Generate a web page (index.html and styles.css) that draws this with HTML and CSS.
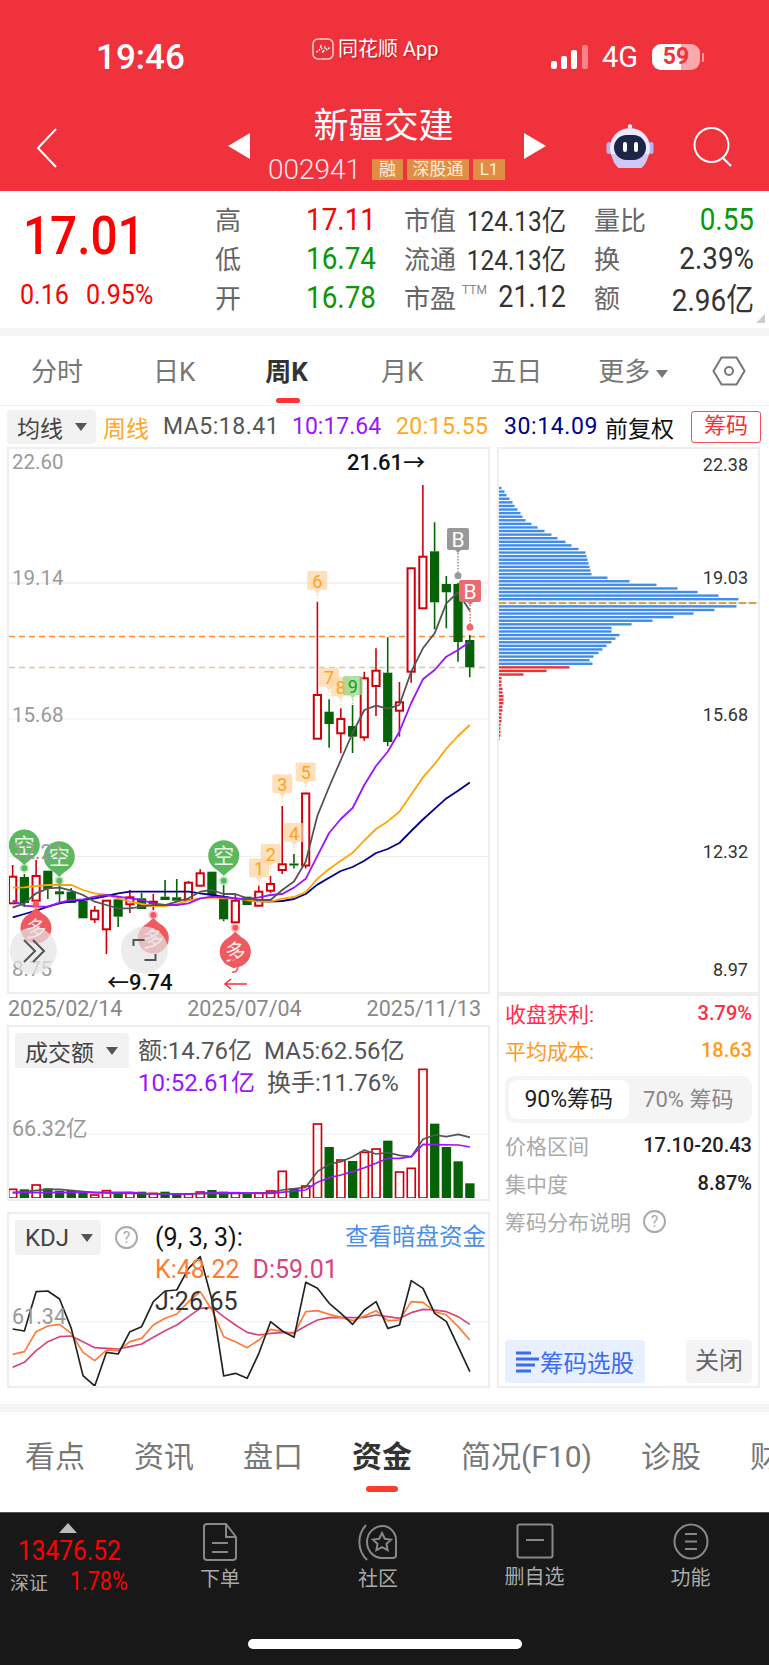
FILE: index.html
```html
<!DOCTYPE html>
<html lang="zh-CN">
<head>
    <meta charset="UTF-8">
    <title>新疆交建 周K</title>
    <meta name="viewport" content="width=device-width, initial-scale=1.0">
    <link rel="stylesheet" href="styles.css">
</head>
<body>
<div class="phone">
    <header class="hero">
        <div class="status">
            <span class="clock">19:46</span>
            <span class="carrier">
                <svg class="app-logo" width="22" height="22" viewBox="0 0 22 22">
                    <rect x="1" y="1" width="20" height="20" rx="5" fill="#e8303a" stroke="#fbd0d0" stroke-width="1.5"/>
                    <path d="M4 14l3-1 2-5 2 7 2-6 2 3 3-3" fill="none" stroke="#fff" stroke-width="1.3" stroke-dasharray="2 1.4"/>
                </svg>
                同花顺 App
            </span>
            <span class="status-right">
                <svg width="38" height="24" viewBox="0 0 38 24">
                    <rect x="0" y="16" width="6" height="8" rx="2" fill="#fff"/>
                    <rect x="10" y="11" width="6" height="13" rx="2" fill="#fff"/>
                    <rect x="20" y="5" width="6" height="19" rx="2" fill="#fff"/>
                    <rect x="31" y="0" width="6" height="24" rx="2" fill="#fff" fill-opacity=".4"/>
                </svg>
                <span class="net">4G</span>
                <span class="battery">59</span>
                <span class="battery-nub"></span>
            </span>
        </div>
        <div class="stock-nav">
            <svg class="back" width="22" height="40" viewBox="0 0 22 40">
                <path d="M20 1L2 20l18 19" fill="none" stroke="#fff" stroke-width="2"/>
            </svg>
            <svg class="prev" width="22" height="26" viewBox="0 0 22 26"><path d="M22 0v26L0 13z" fill="#fff"/></svg>
            <div class="stock-name">
                <div class="title">新疆交建</div>
                <div class="code-row">
                    <span class="code">002941</span>
                    <span class="tag tag-a">融</span>
                    <span class="tag tag-b">深股通</span>
                    <span class="tag tag-c">L1</span>
                </div>
            </div>
            <svg class="next" width="22" height="26" viewBox="0 0 22 26"><path d="M0 0v26l22-13z" fill="#fff"/></svg>
            <svg class="robot" width="48" height="44" viewBox="0 0 48 44">
                <path d="M24 6V2" stroke="#e8e6f8" stroke-width="2"/>
                <circle cx="24" cy="2.5" r="2.2" fill="#f1effb"/>
                <rect x="0.5" y="18" width="5" height="12" rx="2.5" fill="#b9b4ee"/>
                <rect x="42.5" y="18" width="5" height="12" rx="2.5" fill="#b9b4ee"/>
                <circle cx="24" cy="24" r="20" fill="#eceafc"/>
                <path d="M6 30a18 18 0 0 0 36 0" fill="#cfc8f6"/>
                <rect x="8" y="11" width="32" height="25" rx="12.5" fill="#1d2547"/>
                <rect x="17" y="18" width="4" height="10" rx="2" fill="#fff"/>
                <rect x="28" y="18" width="4" height="10" rx="2" fill="#fff"/>
            </svg>
            <svg class="search" width="40" height="40" viewBox="0 0 40 40">
                <circle cx="18.5" cy="18" r="17" fill="none" stroke="#fff" stroke-width="2"/>
                <path d="M30 31l8 8" stroke="#fff" stroke-width="2"/>
            </svg>
        </div>
    </header>

    <section class="quote">
        <div class="quote-main">
            <div class="last">17.01</div>
            <div class="change"><span>0.16</span><span>0.95%</span></div>
        </div>
        <div class="quote-grid">
            <span class="q-label">高</span><span class="q-val up">17.11</span>
            <span class="q-label pad">市值</span><span class="q-val small">124.13亿</span>
            <span class="q-label pad">量比</span><span class="q-val down">0.55</span>
            <span class="q-label">低</span><span class="q-val down">16.74</span>
            <span class="q-label pad">流通</span><span class="q-val small">124.13亿</span>
            <span class="q-label pad">换</span><span class="q-val dark">2.39%</span>
            <span class="q-label">开</span><span class="q-val down">16.78</span>
            <span class="q-label pad">市盈<span class="ttm">TTM</span></span><span class="q-val small big">21.12</span>
            <span class="q-label pad">额</span><span class="q-val dark">2.96亿</span>
        </div>
        <span class="corner"></span>
    </section>
    <div class="band"></div>

    <nav class="period-tabs">
        <span class="p-tab t1">分时</span>
        <span class="p-tab t2">日K</span>
        <span class="p-tab t3 active">周K</span>
        <span class="p-tab t4">月K</span>
        <span class="p-tab t5">五日</span>
        <span class="p-tab t6">更多<i class="caret"></i></span>
        <svg class="hex" width="34" height="30" viewBox="0 0 34 30">
            <path d="M9.5 1.5h15L32.5 15l-8 13.5h-15L1.5 15z" fill="none" stroke="#777" stroke-width="2"/>
            <circle cx="17" cy="15" r="4" fill="none" stroke="#777" stroke-width="2"/>
        </svg>
    </nav>

    <div class="legend">
        <span class="select ma-select">均线<i class="caret dark-caret"></i></span>
        <span class="lg w-week c-orange">周线</span>
        <span class="lg w-ma5 c-gray">MA5:18.41</span>
        <span class="lg w-ma10 c-purple">10:17.64</span>
        <span class="lg w-ma20 c-orange">20:15.55</span>
        <span class="lg w-ma30 c-navy">30:14.09</span>
        <span class="lg c-black">前复权</span>
        <span class="chip-btn">筹码</span>
    </div>

    <div class="charts">
        <div class="left-col">
            <div class="panel main-panel">
                <svg id="kline" width="479" height="543" viewBox="9 449 479 543"></svg>
            </div>
            <div class="dates"><span>2025/02/14</span><span>2025/07/04</span><span>2025/11/13</span></div>
            <div class="panel vol-panel">
                <svg id="volume" width="479" height="171" viewBox="27 81 1437 513" preserveAspectRatio="none"></svg>
                <span class="select vol-select">成交额<i class="caret dark-caret"></i></span>
                <div class="vol-info">
                    <div><span>额:14.76亿</span><span>MA5:62.56亿</span></div>
                    <div><span class="c-purple">10:52.61亿</span><span>换手:11.76%</span></div>
                </div>
                <span class="axis-note vol-note">66.32亿</span>
            </div>
            <div class="panel kdj-panel">
                <svg id="kdj" width="479" height="172" viewBox="27 642 1437 516" preserveAspectRatio="none"></svg>
                <span class="select kdj-select">KDJ<i class="caret dark-caret"></i></span>
                <span class="help kdj-help">?</span>
                <div class="kdj-info">
                    <div class="c-black">(9, 3, 3):</div>
                    <div><span class="c-k">K:48.22</span><span class="c-d">D:59.01</span></div>
                    <div class="c-j">J:26.65</div>
                </div>
                <span class="dark-link">查看暗盘资金</span>
                <span class="axis-note kdj-note">61.34</span>
            </div>
        </div>
        <div class="right-col">
            <div class="panel chip-panel">
                <svg id="chips" width="259" height="543" viewBox="499 448 259 543"></svg>
            </div>
            <div class="panel chip-info">
                <div class="row c-profit"><span>收盘获利:</span><b>3.79%</b></div>
                <div class="row c-cost"><span>平均成本:</span><b>18.63</b></div>
                <div class="switch">
                    <span class="switch-on">90%筹码</span>
                    <span class="switch-off">70% 筹码</span>
                </div>
                <div class="row stat"><span>价格区间</span><b>17.10-20.43</b></div>
                <div class="row stat"><span>集中度</span><b>8.87%</b></div>
                <div class="row stat explain"><span>筹码分布说明</span><span class="help">?</span></div>
                <div class="chip-actions">
                    <span class="pick">
                        <svg width="23" height="22" viewBox="0 0 23 22">
                            <path d="M0 2h15M0 8h23M0 14h19M0 20h15" stroke="#3a6bf5" stroke-width="3"/>
                        </svg>
                        筹码选股
                    </span>
                    <span class="close">关闭</span>
                </div>
            </div>
        </div>
    </div>

    <div class="band"></div>
    <nav class="info-tabs">
        <span>看点</span>
        <span>资讯</span>
        <span>盘口</span>
        <span class="active">资金</span>
        <span>简况(F10)</span>
        <span>诊股</span>
        <span>财务</span>
    </nav>

    <footer class="dock">
        <div class="ticker">
            <i class="tri"></i>
            <div class="index">13476.52</div>
            <div class="index-row"><span>深证</span><b>1.78%</b></div>
        </div>
        <div class="dock-item">
            <svg width="34" height="38" viewBox="0 0 34 38">
                <path d="M4 1h19l10 13v20a3 3 0 0 1-3 3H4a3 3 0 0 1-3-3V4a3 3 0 0 1 3-3z" fill="none" stroke="#888" stroke-width="2"/>
                <path d="M23 1v13h10M9 20h16M9 29h16" fill="none" stroke="#888" stroke-width="2"/>
            </svg>
            下单
        </div>
        <div class="dock-item">
            <svg width="40" height="38" viewBox="0 0 40 38">
                <path d="M8 2C-1 12-1 27 9 37" fill="none" stroke="#888" stroke-width="2"/>
                <path d="M25 3c7 0 13 7 13 14v15a3 3 0 0 1-3 3H24C15 35 9 27 9 19 9 10 16 3 25 3z" fill="none" stroke="#888" stroke-width="2"/>
                <path d="M24 10l2.8 5.8 6.2.8-4.5 4.3 1.1 6.2-5.6-3-5.600 3 1.100-6.200-4.500-4.300 6.200-.8z" fill="none" stroke="#888" stroke-width="2"/>
            </svg>
            社区
        </div>
        <div class="dock-item">
            <svg width="38" height="36" viewBox="0 0 38 36">
                <rect x="1.5" y="1.5" width="35" height="33" rx="2" fill="none" stroke="#888" stroke-width="2"/>
                <path d="M10 17h18" stroke="#888" stroke-width="2"/>
            </svg>
            删自选
        </div>
        <div class="dock-item">
            <svg width="36" height="37" viewBox="0 0 36 37">
                <ellipse cx="18" cy="18.5" rx="16.5" ry="17" fill="none" stroke="#888" stroke-width="2"/>
                <path d="M12 11h12M12 18.5h12M12 26h12" stroke="#888" stroke-width="2"/>
            </svg>
            功能
        </div>
        <div class="home-bar"></div>
    </footer>
</div>
<script src="chart.js"></script>
</body>
</html>
```

FILE: styles.css
```css
/* Base */
* {
    box-sizing: border-box;
}

body {
    margin: 0;
    background: #fff;
    font-family: Roboto, "Noto Sans CJK SC", sans-serif;
    color: #333;
}

.phone {
    width: 769px;
    height: 1665px;
    overflow: hidden;
    position: relative;
}

i {
    font-style: normal;
}

/* Red header */
.hero {
    height: 191px;
    background: #f0323c;
    color: #fff;
}

.status {
    height: 100px;
    position: relative;
    display: flex;
    align-items: center;
    padding: 14px 0 0 96px;
}

.clock {
    font-size: 35px;
    font-weight: 500;
}

.carrier {
    position: absolute;
    left: 312px;
    top: 37px;
    display: flex;
    align-items: center;
    gap: 4px;
    font-size: 20px;
    line-height: 24px;
    text-shadow: 1px 1px 2px rgba(120, 0, 0, 0.5);
}

.status-right {
    margin-left: auto;
    margin-right: 65px;
    display: flex;
    align-items: center;
}

.net {
    font-size: 29px;
    margin-left: 13px;
    width: 50px;
}

.battery {
    width: 48px;
    height: 26px;
    border-radius: 9px;
    background: linear-gradient(to right, #fff 60%, #fba7ab 60%);
    color: #f0323c;
    font-size: 23px;
    font-weight: 700;
    text-align: center;
    line-height: 26px;
}

.battery-nub {
    width: 2px;
    height: 9px;
    margin-left: 2px;
    background: #fba7ab;
    border-radius: 1px;
}

.stock-nav {
    height: 91px;
    display: flex;
    align-items: flex-start;
    padding-left: 36px;
}

.back {
    margin-top: 28px;
}

.prev {
    margin: 33px 0 0 170px;
}

.next {
    margin-top: 33px;
}

.stock-name {
    width: 274px;
    text-align: center;
}

.title {
    font-size: 35px;
    line-height: 50px;
    margin: 2px 7px 0 0;
}

.code-row {
    display: flex;
    align-items: center;
    height: 21px;
    margin: 7px 0 0 17px;
}

.code {
    font-size: 28px;
    font-weight: 300;
    margin-right: 10px;
    width: 95px;
    color: #fde6e6;
}

.tag {
    height: 21px;
    background: #e08e45;
    color: #ffeeda;
    font-size: 17px;
    line-height: 21px;
    text-align: center;
    margin-right: 4px;
}

.tag-a {
    width: 31px;
}

.tag-b {
    width: 62px;
}

.tag-c {
    width: 32px;
    margin: 0;
}

.robot {
    margin: 24px 0 0 60px;
}

.search {
    margin: 27px 0 0 39px;
}

/* Quote block */
.quote {
    height: 137px;
    display: flex;
    position: relative;
}

.quote-main {
    width: 215px;
    padding: 15px 0 0 0;
}

.last {
    font-size: 53px;
    font-weight: 500;
    line-height: 60px;
    color: #f00;
    margin-left: 23px;
    transform: scaleX(.9);
    transform-origin: left center;
}

.change {
    font-size: 27px;
    line-height: 32px;
    color: #f00;
    display: flex;
    padding: 13px 0 0 20px;
}

.change span {
    width: 66px;
    transform: scaleX(.93);
    transform-origin: left center;
    white-space: nowrap;
}

.quote-grid {
    width: 539px;
    padding-top: 8px;
    display: grid;
    grid-template-columns: 30px 131px 64px 126px 64px 124px;
    grid-auto-rows: 39px;
    align-items: center;
}

.q-label {
    font-size: 26px;
    color: #666;
    white-space: nowrap;
}

.q-label.pad {
    padding-left: 28px;
}

.q-val {
    font-size: 32px;
    text-align: right;
    white-space: nowrap;
    transform: scaleX(.87);
    transform-origin: right center;
}

.q-val.small {
    font-size: 28px;
    color: #333;
}

.q-val.big {
    font-size: 31px;
}

.q-val.dark {
    color: #333;
}

.up {
    color: #f00;
}

.down {
    color: #089808;
}

.ttm {
    font-size: 12px;
    vertical-align: 14px;
    margin-left: 6px;
    color: #888;
}

.corner {
    position: absolute;
    right: 4px;
    bottom: 5px;
    width: 0;
    height: 0;
    border-left: 9px solid transparent;
    border-bottom: 9px solid #ccc;
}

.band {
    height: 8px;
    background: #f5f5f5;
}

/* Period tabs */
.period-tabs {
    height: 70px;
    position: relative;
    border-bottom: 1px solid #eee;
    display: flex;
    align-items: center;
    font-size: 26px;
    color: #777;
    padding-bottom: 3px;
}

.p-tab {
    white-space: nowrap;
}

.t1 {
    margin-left: 31px;
}

.t2 {
    margin-left: 70px;
}

.t3 {
    margin-left: 70px;
}

.t4 {
    margin-left: 73px;
}

.t5 {
    margin-left: 67px;
}

.t6 {
    margin-left: 56px;
}

.p-tab.active {
    font-weight: 700;
    color: #333;
    position: relative;
}

.p-tab.active::after {
    content: "";
    position: absolute;
    left: 11px;
    bottom: -15px;
    width: 24px;
    height: 5px;
    border-radius: 3px;
    background: #f33;
}

.caret {
    display: inline-block;
    width: 0;
    height: 0;
    margin-left: 6px;
    vertical-align: 3px;
    border-left: 6px solid transparent;
    border-right: 6px solid transparent;
    border-top: 8px solid #777;
}

.hex {
    margin: 3px 0 0 44px;
}

/* Legend row */
.legend {
    height: 41px;
    display: flex;
    align-items: center;
    padding-left: 7px;
    font-size: 23px;
    white-space: nowrap;
}

.select {
    background: #f2f2f2;
    border-radius: 4px;
    color: #444;
    display: flex;
    align-items: center;
}

.dark-caret {
    border-top-color: #555;
    margin-left: 12px;
    vertical-align: 0;
}

.ma-select {
    width: 89px;
    height: 34px;
    padding-left: 10px;
    margin-right: 7px;
}

.w-week {
    width: 60px;
}

.w-ma5 {
    width: 129px;
    letter-spacing: .5px;
}

.w-ma10 {
    width: 104px;
}

.w-ma20 {
    width: 108px;
    letter-spacing: .4px;
}

.w-ma30 {
    width: 101px;
    letter-spacing: .6px;
}

.c-orange {
    color: #ffa726;
}

.c-gray {
    color: #555;
}

.c-purple {
    color: #9a14ff;
}

.c-navy {
    color: #00008b;
}

.c-black {
    color: #111;
}

.c-k {
    color: #ff7a33;
}

.c-d {
    color: #d6447f;
}

.c-j {
    color: #333;
}

.chip-btn {
    position: absolute;
    left: 691px;
    top: 411px;
    width: 70px;
    height: 32px;
    border: 1.5px solid #f0505a;
    border-radius: 3px;
    color: #f0323c;
    font-size: 22px;
    text-align: center;
    line-height: 28px;
}

/* Chart area */
.charts {
    display: flex;
    padding-left: 7px;
    height: 957px;
}

.left-col {
    width: 483px;
    margin-right: 7px;
}

.right-col {
    width: 263px;
}

.panel {
    border: 2px solid #eee;
    position: relative;
}

.panel svg {
    display: block;
}

.main-panel {
    height: 547px;
}

.dates {
    height: 31px;
    display: flex;
    justify-content: space-between;
    padding: 0 9px 0 1px;
    font-size: 21.5px;
    line-height: 30px;
    color: #888;
}

.vol-panel {
    height: 176px;
    margin-bottom: 11px;
}

.kdj-panel {
    height: 176px;
}

.vol-select {
    position: absolute;
    left: 6px;
    top: 6px;
    width: 114px;
    height: 35px;
    padding-left: 10px;
    font-size: 23px;
}

.vol-info {
    position: absolute;
    left: 129px;
    top: 8px;
    font-size: 24px;
    line-height: 32px;
    color: #555;
    white-space: nowrap;
}

.vol-info span + span {
    margin-left: 12px;
}

.axis-note {
    position: absolute;
    left: 3px;
    font-size: 21.5px;
    color: #999;
}

.vol-note {
    top: 84px;
}

.kdj-note {
    top: 90px;
}

.kdj-select {
    position: absolute;
    left: 6px;
    top: 6px;
    width: 86px;
    height: 35px;
    padding-left: 10px;
    font-size: 24px;
}

.help {
    display: inline-block;
    width: 23px;
    height: 23px;
    border: 2px solid #aaa;
    border-radius: 50%;
    color: #aaa;
    font-size: 16px;
    line-height: 19px;
    text-align: center;
}

.kdj-help {
    position: absolute;
    left: 106px;
    top: 12px;
}

.kdj-info {
    position: absolute;
    left: 146px;
    top: 8px;
    font-size: 25px;
    line-height: 32px;
    white-space: nowrap;
}

.kdj-info span + span {
    margin-left: 13px;
}

.dark-link {
    position: absolute;
    right: 2px;
    top: 7px;
    font-size: 23.5px;
    line-height: 32px;
    color: #4a90e8;
}

/* Right column */
.chip-panel {
    height: 547px;
}

.chip-info {
    height: 394px;
    padding: 0 6px;
    font-size: 21px;
}

.row {
    display: flex;
    justify-content: space-between;
    align-items: center;
    height: 37px;
    padding-bottom: 4px;
}

.row b {
    font-size: 20px;
    font-weight: 500;
}

.c-profit {
    color: #ff2d46;
}

.c-cost {
    color: #ff9a1a;
}

.switch {
    height: 47px;
    margin: 6px 0 5px;
    padding: 4px;
    display: flex;
    background: #f4f4f4;
    border-radius: 10px;
}

.switch-on {
    width: 120px;
    background: #fff;
    border-radius: 8px;
    color: #222;
    font-size: 23px;
    text-align: center;
    line-height: 39px;
}

.switch-off {
    width: 120px;
    color: #888;
    font-size: 22px;
    text-align: center;
    line-height: 39px;
}

.stat {
    height: 38px;
    color: #aaa;
}

.stat b {
    color: #222;
}

.explain {
    justify-content: flex-start;
    gap: 12px;
}

.chip-actions {
    display: flex;
    justify-content: space-between;
    margin-top: 98px;
}

.pick {
    width: 140px;
    height: 43px;
    background: #e8efff;
    border-radius: 4px;
    color: #3a6bf5;
    font-size: 23.5px;
    display: flex;
    align-items: center;
    padding-left: 11px;
    gap: 1px;
    white-space: nowrap;
}

.close {
    width: 66px;
    height: 43px;
    background: #f4f4f4;
    border-radius: 4px;
    color: #666;
    font-size: 24px;
    text-align: center;
    line-height: 43px;
}

/* Lower tabs */
.info-tabs {
    height: 100px;
    display: flex;
    align-items: center;
    gap: 49px;
    padding: 0 0 16px 25px;
    font-size: 30px;
    color: #777;
    white-space: nowrap;
}

.info-tabs .active {
    font-weight: 700;
    color: #333;
    position: relative;
}

.info-tabs .active::after {
    content: "";
    position: absolute;
    left: 14px;
    bottom: -16px;
    width: 32px;
    height: 6px;
    border-radius: 3px;
    background: #ff3b30;
}

/* Bottom dock */
.dock {
    height: 153px;
    background: #181818;
    border-top: 1px solid #555;
    display: grid;
    grid-template-columns: 141px 158px 158px 155px 157px;
    align-items: start;
    position: relative;
}

.ticker {
    padding: 10px 0 0 10px;
    position: relative;
    white-space: nowrap;
}

.tri {
    display: block;
    width: 0;
    height: 0;
    margin-left: 49px;
    border-left: 9px solid transparent;
    border-right: 9px solid transparent;
    border-bottom: 10px solid #bbb;
}

.index {
    font-size: 28px;
    line-height: 32px;
    margin: 2px 0 0 8px;
    color: #f00;
    transform: scaleX(.875);
    transform-origin: left center;
}

.index-row {
    display: flex;
    align-items: center;
    gap: 22px;
    margin-top: 0;
    font-size: 19px;
    color: #aaa;
}

.index-row b {
    font-size: 25px;
    font-weight: 400;
    color: #f00;
    transform: scaleX(.86);
    transform-origin: left center;
}

.dock-item {
    display: flex;
    flex-direction: column;
    align-items: center;
    gap: 4px;
    padding-top: 10px;
    font-size: 20px;
    line-height: 28px;
    color: #aaa;
}

.home-bar {
    position: absolute;
    left: 248px;
    top: 126px;
    width: 274px;
    height: 10px;
    background: #fff;
    border-radius: 5px;
}
```

FILE: chart.js
```js
// candles: high, body top, body bottom, low, r = red / g = green
const candles = [
    [865, 876.7, 903.3, 903, 'r'], [874, 877, 903, 907, 'g'], [860, 876, 900.7, 901, 'r'], [870.7, 870.7, 889, 899, 'g'],
    [880, 891.3, 894.3, 903, 'g'], [888, 891.7, 903, 903, 'g'], [901, 901, 918.3, 918.3, 'g'], [906, 910.7, 919.3, 923, 'r'],
    [900, 900.7, 929.3, 954, 'r'], [896.7, 899.3, 916.7, 927, 'g'], [890, 897.3, 904.3, 913, 'r'], [893, 898.3, 909, 909, 'g'],
    [894, 901.7, 903, 910, 'r'], [880, 896.7, 900, 900, 'g'], [879, 897.3, 900.7, 900.7, 'g'], [881, 882.7, 900, 900, 'r'],
    [869.3, 873.3, 885.7, 885.7, 'r'], [871.7, 871.7, 895, 896.7, 'g'], [885, 896.7, 919.3, 921.3, 'g'], [894, 900.7, 922.3, 922.3, 'r'],
    [896.7, 896.7, 905, 905, 'g'], [885, 891.7, 905.7, 905.7, 'r'], [876, 884, 890.7, 893, 'r'], [806, 864.3, 870, 874, 'r'],
    [854, 863.5, 865.5, 868.5, 'g'], [792.7, 793.5, 865.5, 868.5, 'r'], [601.7, 695, 738.7, 738.7, 'r'], [699.3, 711.7, 724, 747.7, 'g'],
    [708.3, 719, 733.3, 753.3, 'r'], [705, 726, 736.7, 753, 'g'], [671.7, 678.3, 737.3, 740.7, 'r'], [648.3, 670.7, 686, 716, 'r'],
    [637.3, 672.7, 742, 746, 'g'], [682, 702.3, 710.7, 736.7, 'r'], [568.3, 568.3, 671.7, 682.7, 'r'], [485, 556.7, 608.3, 608.3, 'r'],
    [522.3, 551.3, 602.3, 629.3, 'g'], [576, 584, 592.3, 628.3, 'g'], [583, 584, 642, 661.7, 'g'], [635, 640, 667.3, 677.3, 'g']
];

const ma5 = [907.7, 903.3, 893.3, 888.3, 887.7, 890.7, 895, 901.7, 905, 908.3, 908.3, 906.7, 905, 905, 901.7, 898.3, 891.7, 890, 894, 894, 898.3, 900, 900, 890, 881.5, 861.6, 815.7, 787, 760, 733, 710, 705.7, 708.7, 705, 671.7, 648.3, 633.3, 603.3, 592.3, 610.7];
const ma10 = [900.7, 905.7, 906.7, 906.7, 902.7, 900, 899.3, 896.7, 895, 896.7, 898.3, 900, 903.3, 905, 905, 903.3, 898.3, 896.7, 897.3, 898.3, 899.3, 897.3, 895, 894, 887.6, 878.8, 855.8, 833, 819, 808, 785, 766, 751.7, 731.7, 703, 679.3, 670, 656.7, 650, 641.7];
const ma20 = [887.7, 887.3, 886, 885, 885, 885, 890, 893.3, 895, 898.3, 901.7, 904, 906, 906, 904, 900.7, 898.3, 897.7, 898.3, 898.3, 900, 901.7, 901.7, 898.7, 897, 892, 878.8, 869, 860.8, 852.8, 840.5, 829, 821.4, 811.8, 794.6, 777.4, 764, 748.7, 736, 725];
const ma30 = [917.3, 914, 910.7, 906.7, 903.3, 901, 900, 898.3, 896, 893.3, 891.7, 891.7, 891.7, 891.7, 891.7, 891.7, 893.3, 895, 896.7, 898.3, 900, 901, 901.7, 901, 899, 894, 884.6, 877.7, 871, 867, 860.8, 853, 849, 843, 831, 819.5, 808.8, 798.4, 790.8, 782.4];

// volume and kdj panels are drawn at 3x, the viewBox scales them back
const volTops = [568, 568, 555, 565, 572, 572, 575, 585, 572, 578, 578, 575, 580, 575, 580, 582, 576, 570, 575, 578, 578, 580, 573, 514, 565, 558, 372, 441, 480, 483, 457, 447, 422, 516, 505, 208, 371, 441, 484, 550];
const volMa5 = [[38, 578], [144, 568], [179, 568], [284, 578], [460, 582], [742, 580], [812, 578], [847, 570], [917, 562], [952, 515], [988, 492], [1023, 485], [1058, 470], [1093, 450], [1128, 462], [1164, 458], [1199, 466], [1234, 470], [1269, 418], [1304, 405], [1339, 410], [1375, 403], [1410, 412]];
const volMa10 = [[38, 578], [284, 577], [390, 577], [460, 582], [566, 582], [636, 578], [812, 580], [917, 570], [952, 547], [988, 533], [1023, 525], [1058, 515], [1093, 503], [1128, 490], [1164, 475], [1199, 475], [1234, 470], [1269, 433], [1304, 434], [1375, 435], [1410, 441]];

const kdjJ = [987, 993, 875, 873, 897, 985, 1127, 1158, 1057, 1062, 995, 980, 905, 873, 870, 805, 770, 900, 1128, 1120, 1135, 1060, 965, 993, 1012, 847, 865, 910, 940, 973, 930, 905, 985, 975, 842, 865, 940, 965, 1040, 1115];
const kdjK = [1063, 1055, 995, 978, 973, 1000, 1057, 1082, 1050, 1052, 1025, 1015, 975, 955, 942, 905, 875, 930, 1010, 1025, 1043, 1020, 988, 995, 1002, 935, 932, 943, 952, 962, 948, 932, 962, 960, 905, 907, 935, 945, 980, 1020];
const kdjD = [1102, 1087, 1052, 1025, 1010, 1008, 1025, 1043, 1045, 1047, 1040, 1032, 1012, 992, 975, 950, 925, 922, 950, 975, 997, 1005, 1000, 998, 998, 978, 960, 953, 952, 953, 952, 945, 950, 955, 938, 928, 930, 935, 950, 973];

// chip distribution: bar length per row, top to bottom
const chipBlue = [3, 6, 8, 11, 14, 16, 19, 22, 24, 27, 33, 39, 46, 53, 59, 67, 73, 80, 87, 88, 89, 90, 91, 92, 93, 109, 131, 158, 179, 199, 220, 240, 0, 238, 216, 195, 175, 154, 133, 113, 113, 121, 117, 113, 108, 104, 100, 95, 91, 94];
const chipRed = [71, 48, 25, 3, 3, 3, 4, 4, 5, 5, 5, 4, 4, 3, 3, 3, 2, 2, 2, 2, 1];

const RED = '#d0000a';
const GREEN = '#066206';

const xAt = i => 12.67 + 11.72 * i;
const zAt = i => 38 + 35.17 * i;

function polyline(ys, color, width, atX) {
    const pts = ys.map((y, i) => atX(i).toFixed(1) + ',' + y).join(' ');
    return `<polyline points="${pts}" fill="none" stroke="${color}" stroke-width="${width}" stroke-linejoin="round"/>`;
}

function pairs(list, color, width) {
    const pts = list.map(p => p.join(',')).join(' ');
    return `<polyline points="${pts}" fill="none" stroke="${color}" stroke-width="${width}" stroke-linejoin="round"/>`;
}

function candle(c, i) {
    const x = xAt(i);
    const [high, top, bottom, low, side] = c;
    const color = side === 'r' ? RED : GREEN;
    let out = `<path d="M${x} ${high}V${top}M${x} ${bottom}V${low}" stroke="${color}" stroke-width="1.6"/>`;
    if (side === 'r') {
        out += `<rect x="${x - 3.6}" y="${top}" width="7.2" height="${bottom - top}" fill="#fff" stroke="${color}" stroke-width="2"/>`;
    } else {
        out += `<rect x="${x - 4.6}" y="${top}" width="9.2" height="${bottom - top}" fill="${color}"/>`;
    }
    return out;
}

function numberTag(x, y, label, green) {
    const bg = green ? 'rgba(150,215,140,.75)' : 'rgba(253,214,165,.75)';
    const fg = green ? '#12a512' : '#ffa31a';
    return `<path d="M${x - 8} ${y - 10}h16a2 2 0 0 1 2 2v15a2 2 0 0 1-2 2h-5l-3 4-3-4h-5a2 2 0 0 1-2-2v-15a2 2 0 0 1 2-2z" fill="${bg}"/>` +
        `<path d="M${x} ${y + 13}v5" stroke="${bg}" stroke-width="1.5" stroke-dasharray="2 1.5"/>` +
        `<text x="${x}" y="${y + 6.5}" text-anchor="middle" font-size="18" fill="${fg}">${label}</text>`;
}

function bubble(x, cy, dotY, label, color) {
    const dir = dotY > cy ? 1 : -1;
    return `<circle cx="${x}" cy="${dotY}" r="5" fill="${color}" fill-opacity=".3"/>` +
        `<circle cx="${x}" cy="${dotY}" r="3" fill="${color}"/>` +
        `<circle cx="${x}" cy="${cy}" r="15.5" fill="${color}"/>` +
        `<path d="M${x - 9} ${cy + 12 * dir}L${x} ${cy + 20 * dir}L${x + 9} ${cy + 12 * dir}z" fill="${color}"/>` +
        `<text x="${x}" y="${cy + 7.5}" text-anchor="middle" font-size="21" fill="#fff" fill-opacity=".9">${label}</text>`;
}

function letterTag(x, cy, dotY, color) {
    return `<path d="M${x} ${cy + 11}V${dotY}" stroke="${color}" stroke-width="1.6" stroke-dasharray="1.6 1.4"/>` +
        `<rect x="${x - 11}" y="${cy - 11}" width="22" height="22" rx="2" fill="${color}"/>` +
        `<path d="M${x - 3} ${cy + 11}L${x} ${cy + 14}L${x + 3} ${cy + 11}z" fill="${color}"/>` +
        `<circle cx="${x}" cy="${dotY}" r="3.5" fill="${color}"/>` +
        `<text x="${x}" y="${cy + 7.5}" text-anchor="middle" font-size="21" fill="#fff">B</text>`;
}

function axisLabel(x, y, text) {
    return `<text x="${x}" y="${y}" font-size="20.5" fill="#999">${text}</text>`;
}

function drawKline() {
    let s = '';
    [583, 719, 856.6].forEach(y => {
        s += `<path d="M9 ${y}H488" stroke="#eee" stroke-width="${y === 583 ? 1.5 : 1}"/>`;
    });
    s += '<path d="M9 636.5H488" stroke="#ff8c33" stroke-width="1.6" stroke-dasharray="6 4"/>';
    s += '<path d="M9 667.5H488" stroke="#e6c4a0" stroke-width="1.6" stroke-dasharray="6 4"/>';
    s += candles.map(candle).join('');
    s += polyline(ma30, '#00008b', 1.8, xAt);
    s += polyline(ma20, '#ffa500', 1.8, xAt);
    s += polyline(ma10, '#9a14ff', 1.8, xAt);
    s += polyline(ma5, '#555', 1.8, xAt);

    s += numberTag(259, 868.5, '1');
    s += numberTag(270.7, 854, '2');
    s += numberTag(282.3, 784.3, '3');
    s += numberTag(294, 833, '4');
    s += numberTag(305.7, 772.4, '5');
    s += numberTag(317.3, 581, '6');
    s += numberTag(329, 677.7, '7');
    s += numberTag(340.7, 687.3, '8');
    s += numberTag(352.7, 686, '9', true);
    s += letterTag(458, 539, 575.7, '#999');
    s += letterTag(470, 591, 627.3, '#ee6a70');

    s += bubble(24.3, 845, 868.3, '空', '#5cb85c');
    s += bubble(59.3, 856.7, 880.7, '空', '#5cb85c');
    s += bubble(223.7, 855.7, 880.7, '空', '#5cb85c');
    s += bubble(36, 928, 904.3, '多', '#ee5a60');
    s += bubble(153.3, 938, 915, '多', '#ee5a60');
    s += bubble(235.3, 951.7, 927.7, '多', '#ee5a60');

    s += axisLabel(12, 468.5, '22.60');
    s += axisLabel(12, 585, '19.14');
    s += axisLabel(12, 722, '15.68');
    s += axisLabel(12, 859, '12.21');
    s += axisLabel(12, 976, '8.75');

    s += '<text x="347" y="470" font-size="22" font-weight="500" fill="#111">21.61→</text>';
    s += '<text x="107" y="990" font-size="22" font-weight="500" fill="#111">←9.74</text>';
    s += '<text x="229" y="973" font-size="20" fill="#ee5a60">9</text>';
    s += '<path d="M247 984H225M231 979l-6 5 6 5" fill="none" stroke="#f0323c" stroke-width="1.6"/>';

    s += '<circle cx="33.3" cy="950.7" r="23.5" fill="#e4e4e4" fill-opacity=".72"/>';
    s += '<path d="M24 940l11 11-11 11M33 940l11 11-11 11" fill="none" stroke="#555" stroke-width="2"/>';
    s += '<circle cx="144.3" cy="950" r="23.5" fill="#e4e4e4" fill-opacity=".72"/>';
    s += '<path d="M133.5 946v-6h11M155.5 954v6h-11" fill="none" stroke="#555" stroke-width="2"/>';

    document.getElementById('kline').innerHTML = s;
}

function drawVolume() {
    let s = '<path d="M27 402H1464" stroke="#eee" stroke-width="3"/>';
    volTops.forEach((top, i) => {
        const x = zAt(i);
        if (candles[i][4] === 'r') {
            s += `<rect x="${x - 12}" y="${top}" width="24" height="${594 - top}" fill="#fff" stroke="${RED}" stroke-width="5"/>`;
        } else {
            s += `<rect x="${x - 14}" y="${top}" width="28" height="${597 - top}" fill="${GREEN}"/>`;
        }
    });
    s += pairs(volMa5, '#555', 5);
    s += pairs(volMa10, '#9a14ff', 5);
    document.getElementById('volume').innerHTML = s;
}

function drawKdj() {
    let s = '<path d="M27 965H1464" stroke="#eee" stroke-width="3"/>';
    s += polyline(kdjD, '#d6447f', 5, zAt);
    s += polyline(kdjK, '#ff7a33', 5, zAt);
    s += polyline(kdjJ, '#222', 5, zAt);
    document.getElementById('kdj').innerHTML = s;
}

function drawChips() {
    let s = '';
    const left = 498.5;
    let y = 487;
    chipBlue.concat(chipRed).forEach((w, i) => {
        const color = i < chipBlue.length ? '#3f8de8' : '#f03030';
        if (w) s += `<rect x="${left}" y="${y - 1.2}" width="${w}" height="2.4" fill="${color}"/>`;
        y += 3.587;
    });
    s += '<path d="M499 602H758" stroke="#dfe6ee" stroke-width="2.5"/>';
    s += '<path d="M499 602H758" stroke="#e0a040" stroke-width="2" stroke-dasharray="7 3"/>';
    [['22.38', 463], ['19.03', 576.4], ['15.68', 713], ['12.32', 850], ['8.97', 968.6]].forEach(l => {
        s += `<text x="748" y="${l[1] + 6.5}" text-anchor="end" font-size="18" fill="#333">${l[0]}</text>`;
    });
    document.getElementById('chips').innerHTML = s;
}

drawKline();
drawVolume();
drawKdj();
drawChips();
```
